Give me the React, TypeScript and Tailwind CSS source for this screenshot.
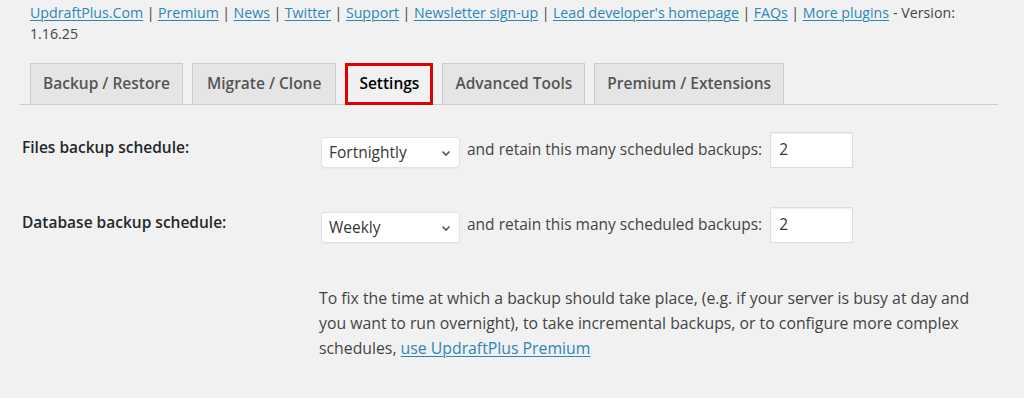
import React from "react";

const font = { fontFamily: '"Open Sans", "Noto Sans", sans-serif' };

function Link({ children, block }: { children: React.ReactNode; block?: boolean }) {
  return (
    <a className={"text-[#2e86b8] underline underline-offset-2 decoration-1" + (block ? " inline-block" : "")}>
      {children}
    </a>
  );
}

function Sep() {
  return <span className="inline-block mx-[3.5px]">|</span>;
}

function Select({ value }: { value: string }) {
  return (
    <div className="flex items-center justify-between w-[139px] h-[31px] bg-white border border-[#e2e2e2] rounded-[4px] pl-[7px] pr-[8px] shadow-[0_1px_1px_rgba(0,0,0,0.04)]">
      <span className="text-[#32373c] text-[15.5px]">{value}</span>
      <svg width="10" height="7" viewBox="0 0 10 7" className="mt-[1px]">
        <path d="M1.5 1.5 L5 5 L8.5 1.5" fill="none" stroke="#555" strokeWidth="1.6" />
      </svg>
    </div>
  );
}

function NumInput() {
  return (
    <div className="w-[83px] h-[36px] bg-white border border-[#dddddd] flex items-center pl-[8px] text-[#32373c] text-[15.5px] shadow-[inset_0_1px_2px_rgba(0,0,0,0.07)]">
      2
    </div>
  );
}

function Tab({ label, active, wide }: { label: string; active?: boolean; wide?: boolean }) {
  if (active) {
    return (
      <div className="h-[42px] px-[11px] flex items-center border-[3px] border-[#e00000] bg-[#f1f1f1] text-black font-semibold text-[15.5px] -mb-px relative z-10">
        {label}
      </div>
    );
  }
  return (
    <div
      className={
        "h-[41px] flex items-center border border-[#cccccc] border-b-0 bg-[#e5e5e5] text-[#555] font-semibold text-[15.5px] " +
        (wide ? "px-[14px]" : "px-[12px]")
      }
    >
      {label}
    </div>
  );
}

export default function App() {
  return (
    <div className="w-[1024px] h-[398px] bg-[#f1f1f1] text-[#444] overflow-hidden" style={font}>
      <div className="pl-[30px] pt-[2px] pr-[40px] text-[14.2px] leading-[21px]">
        <Link>UpdraftPlus.Com</Link>
        <Sep />
        <Link>Premium</Link>
        <Sep />
        <Link>News</Link>
        <Sep />
        <Link>Twitter</Link>
        <Sep />
        <Link>Support</Link>
        <Sep />
        <Link>Newsletter sign-up</Link>
        <Sep />
        <Link>Lead developer's homepage</Link>
        <Sep />
        <Link>FAQs</Link>
        <Sep />
        <Link>More plugins</Link>
        <span className="ml-[4px]">- Version:</span> <span>1.16.25</span>
      </div>

      <div className="ml-[20px] w-[978px] mt-[19px] pl-[10px] flex items-end gap-[9px] border-b border-[#cccccc]">
        <Tab label="Backup / Restore" />
        <Tab label="Migrate / Clone" wide />
        <Tab label="Settings" active />
        <Tab label="Advanced Tools" />
        <Tab label="Premium / Extensions" />
      </div>

      <div className="pl-[22px] mt-[27px] flex items-center">
        <div className="w-[299px] font-semibold text-[15.5px] text-[#23282d] -mt-[4px]">Files backup schedule:</div>
        <div className="flex items-center">
          <div className="mt-[5px]"><Select value="Fortnightly" /></div>
          <span className="ml-[7px] mr-[8px] text-[15.5px]">and retain this many scheduled backups:</span>
          <NumInput />
        </div>
      </div>

      <div className="pl-[22px] mt-[39px] flex items-center">
        <div className="w-[299px] font-semibold text-[15.5px] text-[#23282d] -mt-[4px]">Database backup schedule:</div>
        <div className="flex items-center">
          <div className="mt-[5px]"><Select value="Weekly" /></div>
          <span className="ml-[7px] mr-[8px] text-[15.5px]">and retain this many scheduled backups:</span>
          <NumInput />
        </div>
      </div>

      <p className="ml-[319px] mt-[43px] w-[660px] text-[15.8px] leading-[25px] text-[#444]">
        To fix the time at which a backup should take place, (e.g. if your server is busy at day and you want to run
        overnight), to take incremental backups, or to configure more complex schedules,{" "}
        <Link block>use UpdraftPlus Premium</Link>
      </p>
    </div>
  );
}
